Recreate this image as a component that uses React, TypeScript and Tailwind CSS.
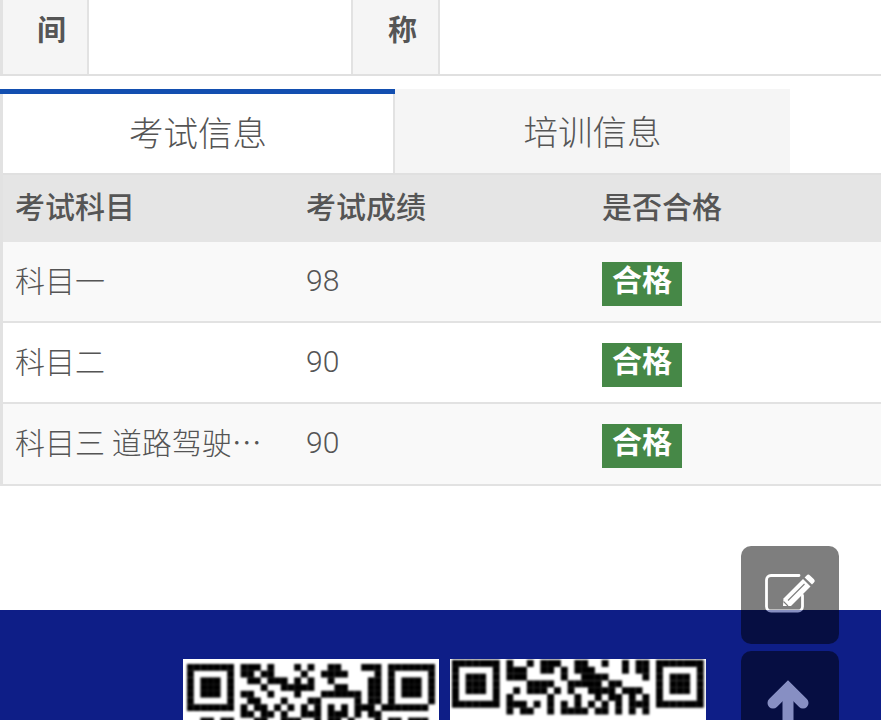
const cjk = "font-['Noto_Sans_CJK_SC','Noto_Sans_CJK_JP',sans-serif]";

const qr1 = [
  "1111111.111.1...1.1..11...111.1111111",
  "1.....1.11.11....1..1111....1.1.....1",
  "1.111.1..11.111.1.1..1.....11.1.111.1",
  "1.111.1....1..11111...11...11.1.111.1",
  "1.111.1.11..1...1...111111.11.1.111.1",
  "1.....1..11...1...11.....1.11.1.....1",
  "1111111.1.11.1.1.1.1.1.1.111.1111111",
  "........11.11.1..111.111.1.11........",
  "..11.11...11..111..1.11.1...1.11.111.",
];
const qr2 = [
  "1111111.1..1.111..11..1..1.11.1111111",
  "1.....1.111..11.1.111....1.11.1.....1",
  "1.111.1.111.....1..1111.....1.1.111.1",
  "1.111.1....1111..11111.11.....1.111.1",
  "1.111.1..1.111.1.1..1111.111..1.111.1",
  "1.....1.1.....1...1..1.11.1.1.1.....1",
  "1111111.111.1.1.1.1.1.1.1.111.1111111",
  "........1.11..1.1111.11.1.1.1........",
];

function Qr({ rows, x0, y0, m, id }: { rows: string[]; x0: number; y0: number; m: number; id: string }) {
  return (
    <svg width="256" height="61" viewBox="0 0 256 61" className="block bg-white">
      <defs>
        <filter id={id}><feGaussianBlur stdDeviation="0.9" /></filter>
      </defs>
      <g filter={`url(#${id})`}>
        {rows.map((r, y) =>
          r.split("").map((c, x) =>
            c === "1" ? (
              <rect key={`${x}-${y}`} x={x0 + x * m} y={y0 + y * m} width={m + 0.1} height={m + 0.1} fill="#000" />
            ) : null
          )
        )}
      </g>
    </svg>
  );
}

const rows = [
  { name: "科目一", score: "98", bg: "bg-[#f9f9f9]" },
  { name: "科目二", score: "90", bg: "bg-white" },
  { name: "科目三 道路驾驶…", score: "90", bg: "bg-[#f9f9f9]" },
];

function EditIcon() {
  return (
    <svg width="98" height="98" viewBox="0 0 98 98" fill="none">
      <path d="M58 29.5H30a4.5 4.5 0 0 0-4.5 4.5V60.5a4.5 4.5 0 0 0 4.5 4.5H57a4.5 4.5 0 0 0 4.5-4.5V49.5" stroke="#fff" strokeWidth="2.8" strokeLinecap="round" />
      <path d="M42.5 52.5 62 33l7.5 7.5L50 60h-8z" fill="#fff" />
      <path d="M63.6 31.4l2-2a2.4 2.4 0 0 1 3.4 0l4 3.8a2.4 2.4 0 0 1 0 3.4l-2 2z" fill="#fff" />
      <path d="M47 54.5 63.5 38M42.5 55.5l4.5 4.5" stroke="#000" strokeWidth="1.1" />
    </svg>
  );
}

function ArrowIcon() {
  return (
    <svg width="98" height="98" viewBox="0 0 98 98" fill="none">
      <path d="M32 52 47 37 62 52" stroke="#fff" strokeWidth="11" strokeLinecap="round" />
      <path d="M47 40V110" stroke="#fff" strokeWidth="11" />
    </svg>
  );
}

export default function App() {
  return (
    <div lang="zh-CN" className={`relative h-[720px] w-[881px] overflow-hidden bg-white text-[#555] ${cjk}`}>
      <div className="flex h-[76px] border-b-2 border-[#e0e0e0]">
        <div className="flex w-[89px] shrink-0 justify-center border-r-2 border-l-[3px] border-[#e2e2e2] bg-[#f5f5f5] pt-[7px] pl-[13px] text-[29px] leading-[42px] font-semibold">间</div>
        <div className="w-[262px] shrink-0" />
        <div className="flex w-[89px] shrink-0 justify-center border-x-2 border-[#e2e2e2] bg-[#f5f5f5] pt-[7px] pl-[14px] text-[29px] leading-[42px] font-semibold">称</div>
        <div className="flex-1" />
      </div>

      <div className="mt-[13px] flex h-[84px]">
        <div className="flex w-[395px] flex-col bg-white">
          <div className="h-[5px] bg-[#134fb0]" />
          <div className="flex flex-1 items-center justify-center border-r-2 border-l-[3px] border-[#e2e2e2] pb-[4px] text-[34.5px] font-light">考试信息</div>
        </div>
        <div className="flex w-[395px] items-center justify-center bg-[#f5f5f5] text-[34.5px] font-light">培训信息</div>
      </div>

      <div className="border-l-[3px] border-[#e2e2e2]">
        <div className="flex h-[68.67px] items-center border-t-2 border-[#e0e0e0] bg-[#e5e5e5] pb-[6px] text-[30px] font-medium">
          <div className="w-[303px] pl-[12px]">考试科目</div>
          <div className="w-[296px]">考试成绩</div>
          <div className="flex-1">是否合格</div>
        </div>
        {rows.map((r) => (
          <div key={r.name} className={`flex h-[81.33px] items-center border-b-2 border-[#e2e2e2] ${r.bg} text-[30px] font-light`}>
            <div className="w-[303px] pb-[4px] pl-[12px] whitespace-nowrap">{r.name}</div>
            <div className="w-[296px] pb-[2px] [font-family:Roboto,sans-serif]">{r.score}</div>
            <div className="flex-1">
              <span className="mt-[5px] flex h-[44px] w-[80px] items-start justify-center bg-[#468847] text-[30px] leading-[33px] font-semibold text-white">合格</span>
            </div>
          </div>
        ))}
      </div>

      <div className="mt-[124px] flex h-[110px] justify-start bg-[#0e1e87] pt-[49px] pl-[183px]">
        <div className="flex gap-[11px]">
          <Qr rows={qr1} x0={4} y0={5} m={6.7} id="qa" />
          <Qr rows={qr2} x0={2} y0={1} m={6.8} id="qb" />
        </div>
      </div>

      <div className="absolute top-[546px] left-[741px] flex flex-col gap-[7px] opacity-50">
        <div className="h-[98px] w-[98px] overflow-hidden rounded-[10px] bg-black"><EditIcon /></div>
        <div className="h-[98px] w-[98px] overflow-hidden rounded-[10px] bg-black"><ArrowIcon /></div>
      </div>
    </div>
  );
}
